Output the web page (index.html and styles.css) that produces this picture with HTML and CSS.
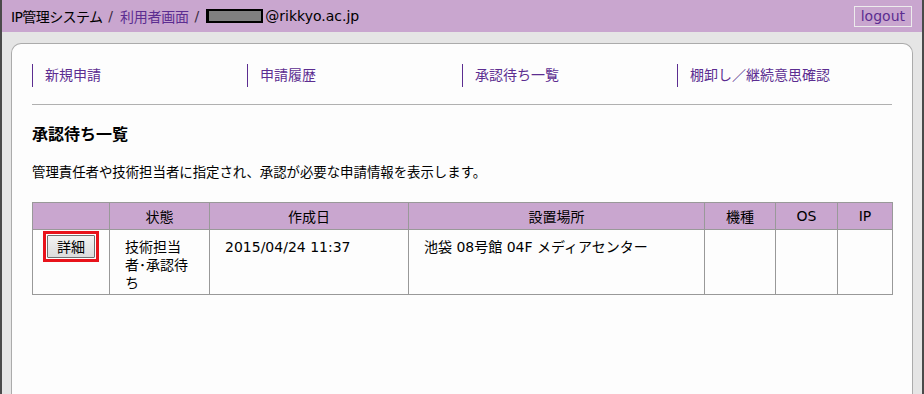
FILE: index.html
```html
<!DOCTYPE html>
<html lang="ja">
<head>
<meta charset="utf-8">
<title>承認待ち一覧</title>
<link rel="stylesheet" href="styles.css">
</head>
<body>
<header class="topbar">
  <div class="crumbs">
    <span class="sys">IP管理システム</span>
    <span class="sep">/</span>
    <a class="crumb-link" href="#">利用者画面</a>
    <span class="sep">/</span>
    <span class="user"><span class="redact"></span>@rikkyo.ac.jp</span>
  </div>
  <a class="logout" href="#">logout</a>
</header>
<main class="card">
  <nav class="menu">
    <a class="menu-item" href="#">新規申請</a>
    <a class="menu-item" href="#">申請履歴</a>
    <a class="menu-item" href="#">承認待ち一覧</a>
    <a class="menu-item" href="#">棚卸し／継続意思確認</a>
  </nav>
  <hr class="rule">
  <h1 class="title">承認待ち一覧</h1>
  <p class="lead">管理責任者や技術担当者に指定され、承認が必要な申請情報を表示します。</p>
  <table class="list">
    <colgroup>
      <col class="c1"><col class="c2"><col class="c3"><col class="c4"><col class="c5"><col class="c6"><col class="c7">
    </colgroup>
    <thead>
      <tr>
        <th></th><th>状態</th><th>作成日</th><th>設置場所</th><th>機種</th><th>OS</th><th>IP</th>
      </tr>
    </thead>
    <tbody>
      <tr>
        <td class="btn-cell"><span class="focus-ring"><button class="detail" type="button">詳細</button></span></td>
        <td>技術担当者･承認待ち</td>
        <td>2015/04/24 11:37</td>
        <td>池袋 08号館 04F メディアセンター</td>
        <td></td>
        <td></td>
        <td></td>
      </tr>
    </tbody>
  </table>
</main>
</body>
</html>
```

FILE: styles.css
```css
html, body {
  margin: 0;
  padding: 0;
}
body {
  height: 394px;
  box-sizing: border-box;
  overflow: hidden;
  background: #e5e5e5;
  border-left: 2px solid #4a4a4a;
  border-right: 2px solid #4a4a4a;
  font-family: "DejaVu Sans", "Noto Sans CJK JP", sans-serif;
  font-size: 14px;
  color: #000;
  display: flex;
  flex-direction: column;
}
a {
  text-decoration: none;
}
.topbar {
  height: 32px;
  flex: none;
  background: #c9a6cf;
  display: flex;
  align-items: center;
  justify-content: space-between;
  padding: 0 10px 0 9px;
}
.crumbs {
  display: flex;
  align-items: center;
  white-space: nowrap;
}
.sys {
  letter-spacing: -0.6px;
}
.sep {
  color: #3a2a40;
  margin: 0 7px 0 6px;
}
.crumb-link {
  color: #5c2d91;
  letter-spacing: -0.3px;
}
.user {
  display: flex;
  align-items: center;
  gap: 2px;
}
.redact {
  display: inline-block;
  width: 52px;
  height: 10px;
  background: #808080;
  border: 2px solid #000;
  border-left-width: 3px;
  border-right-width: 2px;
}
.logout {
  color: #5c2d91;
  border: 1px solid #ececec;
  padding: 0 6px;
  line-height: 19px;
  height: 19px;
}
.card {
  flex: 1;
  margin: 11px 9px 0;
  background: #fdfdfd;
  border: 1px solid #ababab;
  border-bottom: none;
  border-radius: 10px 10px 0 0;
  padding: 20px 20px 0;
}
.menu {
  display: grid;
  grid-template-columns: repeat(4, 1fr);
}
.menu-item {
  border-left: 1px solid #5c2d91;
  padding-left: 12px;
  line-height: 23px;
  height: 23px;
  color: #5c2d91;
}
.rule {
  margin: 17px 0 0;
  border: none;
  border-top: 1px solid #b0b0b0;
  height: 0;
}
.title {
  margin: 20px 0 0;
  font-size: 16px;
  line-height: 20px;
  font-weight: bold;
}
.lead {
  margin: 18px 0 0;
  font-size: 13.4px;
  line-height: 20px;
}
.list {
  margin-top: 19px;
  width: 860px;
  table-layout: fixed;
  border-collapse: collapse;
  border: 1px solid #999;
}
.c1 { width: 77px; }
.c2 { width: 100px; }
.c3 { width: 199px; }
.c4 { width: 296px; }
.c5 { width: 71px; }
.c6 { width: 62px; }
.c7 { width: 55px; }
.list th {
  background: #c9a6cf;
  font-weight: normal;
  height: 26px;
  padding: 0;
  text-align: center;
  border: 1px solid #999;
}
.list td {
  border: 1px solid #999;
  vertical-align: top;
  padding: 8px 15px 2px;
  line-height: 18px;
}
.list td.btn-cell {
  padding: 1px 0 0;
  text-align: center;
}
.focus-ring {
  display: inline-block;
  border: 3px solid #e8131b;
  padding: 1px;
  background: #fff;
  line-height: 0;
}
.detail {
  width: 48px;
  height: 23px;
  font-family: "Noto Sans CJK JP", sans-serif;
  font-size: 14px;
  line-height: 19px;
  padding: 0;
  color: #000;
  border: 1px solid #707070;
  border-radius: 1px;
  background: linear-gradient(#f3f3f3, #dcdcdc);
}
```
